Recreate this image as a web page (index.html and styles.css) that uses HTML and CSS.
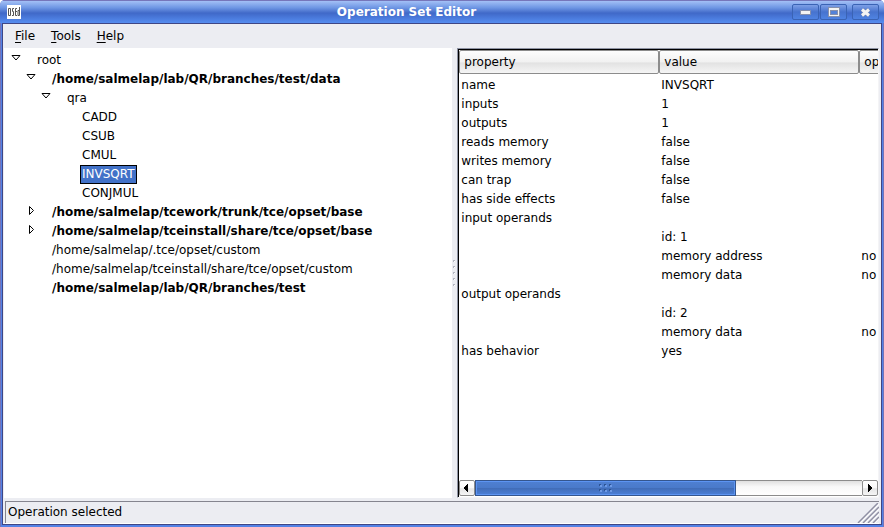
FILE: index.html
```html
<!DOCTYPE html>
<html lang="en">
<head>
<meta charset="utf-8">
<title>Operation Set Editor</title>
<link rel="stylesheet" href="styles.css">
</head>
<body>
<div class="window">
  <header class="titlebar">
    <svg class="app-icon" viewBox="0 0 14 14" aria-hidden="true"><path fill="#fff" d="M0 0h14v14H0z"/><path fill="none" stroke="#555" d="M1.500 3.500h2v7h-2zM7 3.500H5.500v3h1v4H5M10 3.500H8.500v7H10M8.500 6.500H10M12.500 2v8.500h-1.500v-5h1.500"/></svg>
    <h1 class="title">Operation Set Editor</h1>
    <div class="window-controls">
      <button type="button" class="control" aria-label="Minimize"><svg viewBox="0 0 25 14"><path fill="#f4f4f4" stroke="#8790ac" d="M7.500 5.500h10v4h-10z"/></svg></button>
      <button type="button" class="control" aria-label="Maximize"><svg viewBox="0 0 25 14"><path fill="#8790ac" d="M7 2h12v10H7z"/><path fill="#f4f4f4" d="M8 3h10v8H8z"/><path fill="#8790ac" d="M9 5h8v5H9z"/><path fill="#5482d8" d="M10 6h6v3h-6z"/></svg></button>
      <button type="button" class="control close" aria-label="Close"><svg viewBox="0 0 25 14"><path fill="none" stroke="#7180a8" stroke-width="4" d="M9 4.500l7 6M16 4.500l-7 6"/><path fill="none" stroke="#f4f4f4" stroke-width="3" d="M9 4.500l7 6M16 4.500l-7 6"/></svg></button>
    </div>
  </header>
  <div class="frame">
    <nav class="menubar">
      <button type="button" class="menu"><u>F</u>ile</button>
      <button type="button" class="menu"><u>T</u>ools</button>
      <button type="button" class="menu"><u>H</u>elp</button>
    </nav>
    <main class="panes">
      <section class="tree-pane">
        <ul class="tree">
          <li><div class="node"><svg class="arrow" viewBox="0 0 10 10"><path d="M1 0.500h8L5 5z"/></svg><span>root</span></div>
            <ul>
              <li><div class="node bold"><svg class="arrow" viewBox="0 0 10 10"><path d="M1 0.500h8L5 5z"/></svg><span>/home/salmelap/lab/QR/branches/test/data</span></div>
                <ul>
                  <li><div class="node"><svg class="arrow" viewBox="0 0 10 10"><path d="M1 0.500h8L5 5z"/></svg><span>qra</span></div>
                    <ul>
                      <li><div class="node leaf"><span>CADD</span></div></li>
                      <li><div class="node leaf"><span>CSUB</span></div></li>
                      <li><div class="node leaf"><span>CMUL</span></div></li>
                      <li><div class="node leaf"><span class="selected">INVSQRT</span></div></li>
                      <li><div class="node leaf"><span>CONJMUL</span></div></li>
                    </ul>
                  </li>
                </ul>
              </li>
              <li><div class="node bold"><svg class="arrow closed" viewBox="0 0 10 10"><path d="M3.500 0.500v8l4-4z"/></svg><span>/home/salmelap/tcework/trunk/tce/opset/base</span></div></li>
              <li><div class="node bold"><svg class="arrow closed" viewBox="0 0 10 10"><path d="M3.500 0.500v8l4-4z"/></svg><span>/home/salmelap/tceinstall/share/tce/opset/base</span></div></li>
              <li><div class="node leaf"><span>/home/salmelap/.tce/opset/custom</span></div></li>
              <li><div class="node leaf"><span>/home/salmelap/tceinstall/share/tce/opset/custom</span></div></li>
              <li><div class="node leaf bold"><span>/home/salmelap/lab/QR/branches/test</span></div></li>
            </ul>
          </li>
        </ul>
      </section>
      <div class="sash"><i></i><i></i><i></i><i></i><i></i></div>
      <section class="list-pane">
        <div class="table-view">
          <table>
            <colgroup><col class="c"><col class="c"><col class="c"></colgroup>
            <thead><tr><th>property</th><th>value</th><th>op</th></tr></thead>
            <tbody>
              <tr><td>name</td><td>INVSQRT</td><td></td></tr>
              <tr><td>inputs</td><td>1</td><td></td></tr>
              <tr><td>outputs</td><td>1</td><td></td></tr>
              <tr><td>reads memory</td><td>false</td><td></td></tr>
              <tr><td>writes memory</td><td>false</td><td></td></tr>
              <tr><td>can trap</td><td>false</td><td></td></tr>
              <tr><td>has side effects</td><td>false</td><td></td></tr>
              <tr><td>input operands</td><td></td><td></td></tr>
              <tr><td></td><td>id: 1</td><td></td></tr>
              <tr><td></td><td>memory address</td><td>no</td></tr>
              <tr><td></td><td>memory data</td><td>no</td></tr>
              <tr><td>output operands</td><td></td><td></td></tr>
              <tr><td></td><td>id: 2</td><td></td></tr>
              <tr><td></td><td>memory data</td><td>no</td></tr>
              <tr><td>has behavior</td><td>yes</td><td></td></tr>
            </tbody>
          </table>
        </div>
        <div class="scrollbar">
          <button type="button" class="step" aria-label="Scroll left"><svg viewBox="0 0 14 14"><path d="M8 3v8H7v-1H6V9H5V8H4V6h1V5h1V4h1V3z"/></svg></button>
          <div class="track"><div class="thumb"><svg viewBox="0 0 14 8" class="grip"><path fill="#2d5494" d="M0 0h2v2H0zM5 0h2v2H5zM10 0h2v2h-2zM0 5h2v2H0zM5 5h2v2H5zM10 5h2v2h-2z"/><path fill="#6d9ae6" d="M1 1h2v2H1zM6 1h2v2H6zM11 1h2v2h-2zM1 6h2v2H1zM6 6h2v2H6zM11 6h2v2h-2z"/></svg></div></div>
          <button type="button" class="step" aria-label="Scroll right"><svg viewBox="0 0 14 14"><path d="M5 3v8h1v-1h1V9h1V8h1V6H8V5H7V4H6V3z"/></svg></button>
        </div>
      </section>
    </main>
    <footer class="statusbar">
      <span>Operation selected</span>
      <svg class="resize" viewBox="0 0 22 20" aria-hidden="true"><path stroke="#fff" stroke-width="2" d="M2 20L22 0M7 20L22 5M12 20L22 10M17 20l5-5"/><path stroke="#9090a4" stroke-width="1.500" d="M1 20L21 0M6 20L22 4M11 20L22 9M16 20l6-6"/></svg>
    </footer>
  </div>
</div>
</body>
</html>
```
FILE: styles.css
```css
* { box-sizing: border-box; }
body {
  margin: 0;
  background: #fff;
  color: #000;
  font: 12px/19px "DejaVu Sans", sans-serif;
}
button {
  margin: 0;
  padding: 0;
  border: 0;
  background: none;
  color: inherit;
  font: inherit;
}
ul { margin: 0; padding: 0; list-style: none; }
svg { display: block; }

.window {
  display: flex;
  flex-direction: column;
  height: 100vh;
  padding: 0 2px 2px;
  background: linear-gradient(to right, #7474b8 0, #7474b8 1px, #5382e6 1px, #5382e6 calc(100% - 1px), #7474b8 calc(100% - 1px));
  border-radius: 5px 5px 0 0;
  overflow: hidden;
}
.titlebar {
  display: flex;
  align-items: center;
  height: 23px;
  flex: none;
  margin: 0 -2px;
  padding: 0 5px 0 7px;
  border-top: 1px solid #7676ba;
  background: linear-gradient(#a3c0f6 0, #6f97e4 30%, #4069c8 55%, #4673d4 68%, #568df0 100%);
}
.app-icon { width: 14px; height: 14px; }
.title {
  flex: 1;
  margin: 0;
  color: #fff;
  font-size: 12px;
  font-weight: bold;
  text-align: center;
}
.window-controls { display: flex; gap: 1px; }
.control {
  width: 27px;
  height: 16px;
  border: 1px solid #3a63b4;
  border-radius: 2px;
  background: linear-gradient(#7d9fe6, #4773ce 50%, #4f83e2);
}
.control.close { margin-left: 4px; }
.control svg { width: 25px; height: 14px; }

.frame {
  display: flex;
  flex: 1;
  flex-direction: column;
  min-height: 0;
  border: 1px solid #3f4685;
  background: #ecedf2;
}
.menubar {
  display: flex;
  gap: 16px;
  flex: none;
  height: 24px;
  padding: 2px 12px;
}
.menu u { text-underline-offset: 2px; }

.panes { display: flex; flex: 1; min-height: 0; padding: 0 2px 0 1px; }
.tree-pane {
  flex: 449 1 0;
  min-width: 0;
  padding: 3px 0 0 7px;
  background: #fff;
  overflow: hidden;
}
.tree ul { padding-left: 15px; }
.node { display: flex; height: 19px; white-space: nowrap; }
.node.bold { font-weight: bold; }
.node.leaf { padding-left: 26px; }
.arrow { width: 10px; height: 10px; margin: 4px 16px 0 0; }
.arrow.closed { margin-top: 3px; }
.arrow path { fill: none; stroke: #000; }
.node .selected {
  margin-left: -2px;
  padding: 0 1px;
  border: 1px solid #000;
  background: #4272c8;
  color: #fff;
  line-height: 17px;
}

.sash {
  display: flex;
  flex: none;
  flex-direction: column;
  justify-content: center;
  gap: 4px;
  width: 5px;
  padding-left: 1px;
}
.sash i {
  width: 2px;
  height: 2px;
  border: solid #b4b6c0;
  border-width: 1px 0 0 1px;
  background: #fff;
}

.list-pane {
  display: flex;
  flex: 426 1 0;
  flex-direction: column;
  min-width: 0;
  padding: 1px 0 0 1px;
  border: 1px solid #8e93a4;
  border-right-color: #f4f4f6;
  border-bottom-color: #f4f4f6;
  background: #fff;
  box-shadow: inset 1px 1px #000;
}
.table-view { flex: 1; min-height: 0; overflow: hidden; }
table { width: 600px; table-layout: fixed; border-collapse: separate; border-spacing: 0; }
.c { width: 200px; }
th, td { text-align: left; font-weight: normal; white-space: nowrap; }
th {
  height: 24px;
  padding: 1px 4px 0;
  border: 1px solid #8c8c8c;
  border-radius: 2px;
  background: linear-gradient(#fdfdfd, #f1f1f1 50%, #e2e2e2 54%, #f5f5f5);
}
td { height: 19px; padding: 0 2px; }
tbody tr:first-child td { height: 21px; padding-top: 2px; }

.scrollbar { display: flex; flex: none; height: 16px; margin-bottom: 1px; }
.step {
  flex: none;
  width: 16px;
  border: 1px solid #8c8c8c;
  border-radius: 2px;
  background: linear-gradient(#fff, #f8f8f8 50%, #e5e5e5 55%, #f5f5f5);
}
.step svg { width: 14px; height: 14px; }
.track {
  flex: 1;
  border: solid #8c8c8c;
  border-width: 1px 0;
  background: linear-gradient(#e0e0e0, #f8f8f8 40%, #fff);
}
.thumb {
  display: flex;
  align-items: center;
  justify-content: center;
  width: 67.4%;
  height: 16px;
  margin-top: -1px;
  border: 1px solid #34568f;
  background: linear-gradient(#4f80d2, #4a7aca 48%, #416db8 52%, #4b80d8);
  box-shadow: inset 0 0 0 1px #5c94f2;
}
.grip { width: 14px; height: 8px; }

.statusbar {
  display: flex;
  justify-content: space-between;
  flex: none;
  height: 22px;
  margin: 3px 2px 1px;
  padding: 1px 0 0 2px;
  border: solid #85858f;
  border-width: 1px 0 0 1px;
  box-shadow: 0 1px #fff;
}
.resize { width: 22px; height: 20px; fill: none; }
```
